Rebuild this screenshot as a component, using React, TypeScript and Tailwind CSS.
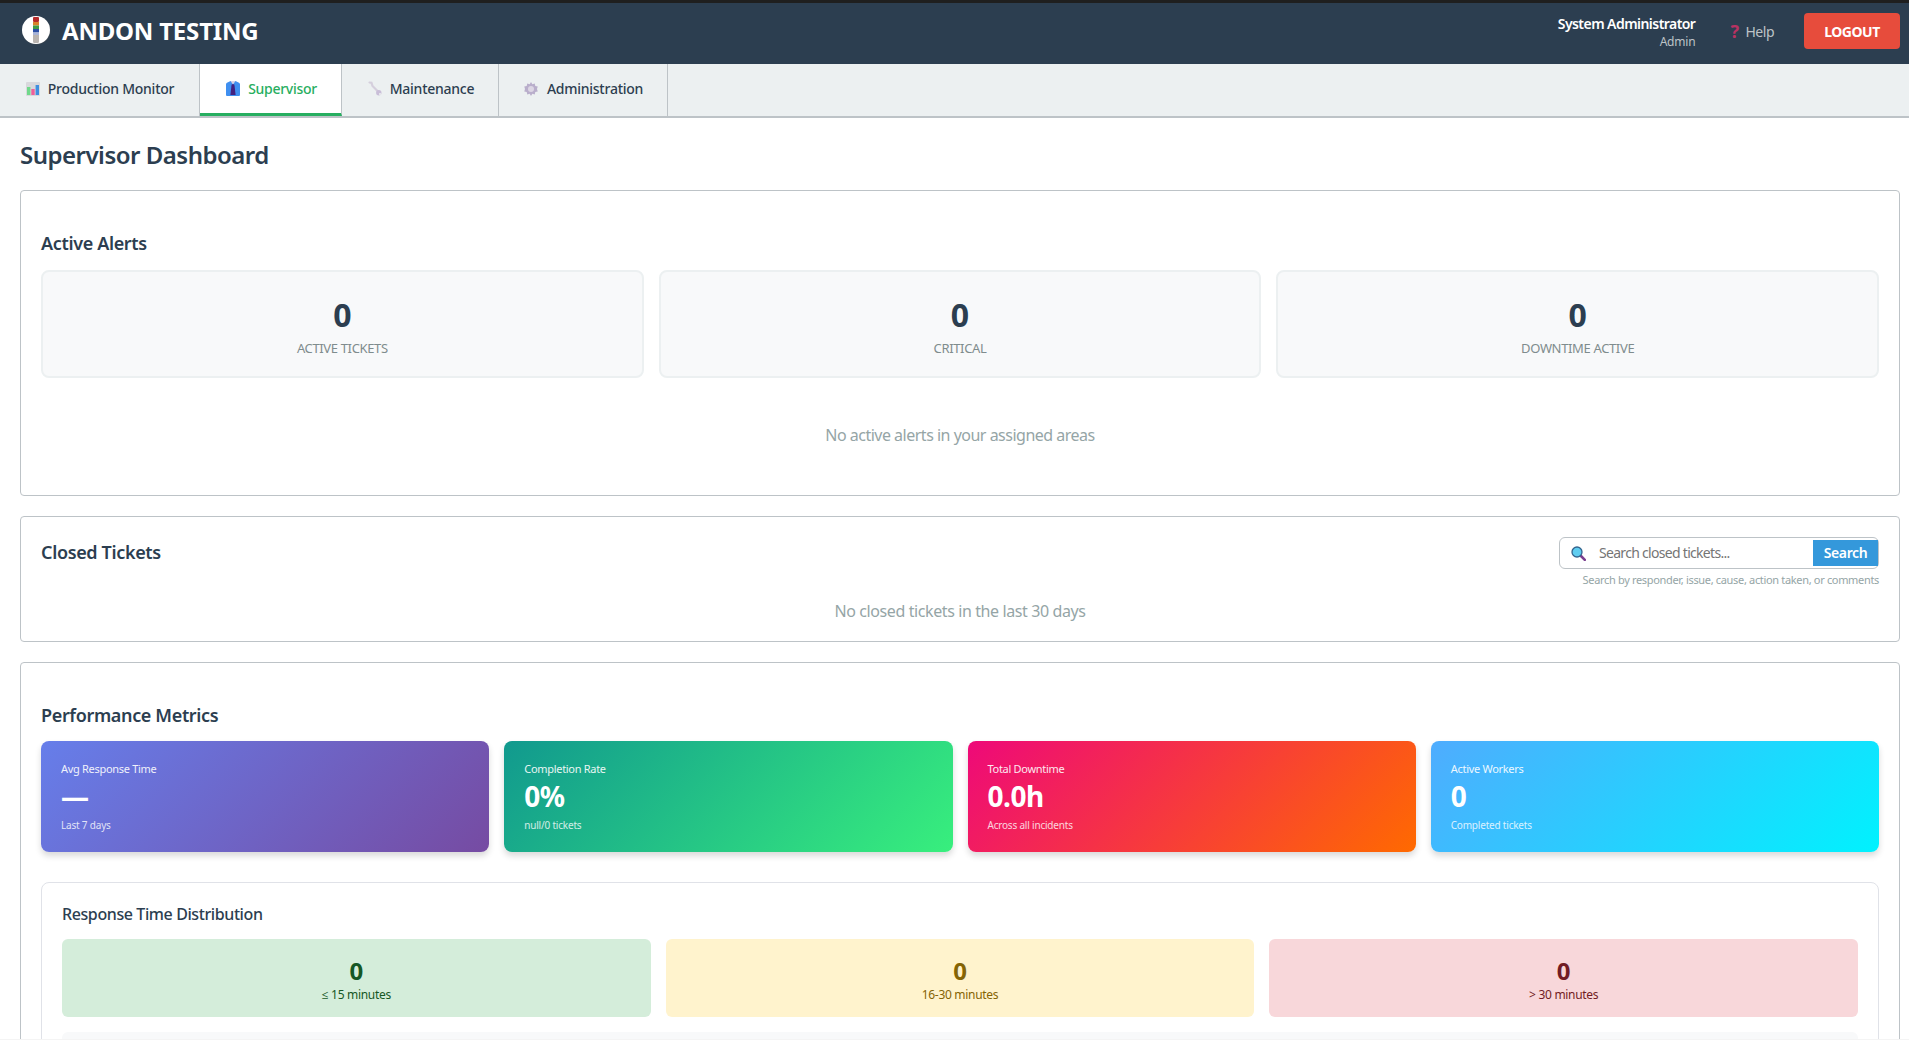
import React from "react";

const FONT = "font-['Noto_Sans','Open_Sans','Liberation_Sans',sans-serif]";

function Logo() {
  return (
    <svg width="30" height="30" viewBox="0 0 30 30" className="mb-[3px] shrink-0">
      <circle cx="15.5" cy="15.5" r="14" fill="#555" opacity="0.45" />
      <circle cx="15" cy="15" r="14" fill="#fff" />
      <rect x="12" y="2" width="6" height="5" rx="1" fill="#b52a2a" />
      <rect x="12" y="7" width="6" height="3.5" fill="#d9812a" />
      <rect x="12" y="10.5" width="6" height="3.5" fill="#3f9a45" />
      <rect x="12" y="14" width="6" height="3.5" fill="#2b4fa5" />
      <rect x="12" y="17.5" width="6" height="2.5" fill="#a9b4d6" />
      <path d="M12 20h6v6.5a1.5 1.5 0 0 1-1.5 1.5h-3a1.5 1.5 0 0 1-1.5-1.5z" fill="#b9b4b0" />
    </svg>
  );
}

function ChartIcon() {
  return (
    <svg width="14" height="14" viewBox="0 0 14 14" className="shrink-0">
      <rect width="14" height="14" rx="1" fill="#d8d8dc" />
      <rect x="1" y="5" width="3.4" height="8" fill="#6fd98a" />
      <rect x="5.3" y="7" width="3.4" height="6" fill="#ef5f9a" />
      <rect x="9.6" y="3" width="3.4" height="10" fill="#3f8fe0" />
    </svg>
  );
}

function TieIcon() {
  return (
    <svg width="14" height="15" viewBox="0 0 14 15" className="shrink-0">
      <path d="M1.5 1.500 4.500 0h5l3 1.500c.8.4 1.500 1 1.500 2V14a1 1 0 0 1-1 1H1a1 1 0 0 1-1-1V3.500c0-1 .7-1.600 1.500-2z" fill="#3f8ff0" />
      <path d="M4.500 0h5L7 3.500z" fill="#d9d4e6" />
      <path d="M5.800 3.200h2.400l.4 1.800 1 9H4.400l1-9z" fill="#43217f" />
    </svg>
  );
}

function WrenchIcon() {
  return (
    <svg width="14" height="15" viewBox="0 0 14 15" className="shrink-0">
      <path d="M1.500 1.500 3.500 1.800 4.500 5l6 6" fill="none" stroke="#d5cfdd" strokeWidth="2.200" strokeLinecap="round" />
      <circle cx="10.800" cy="11.800" r="2.700" fill="#c9bed8" />
      <circle cx="12" cy="13" r="1" fill="#edeff0" />
    </svg>
  );
}

function GearIcon() {
  return (
    <svg width="16" height="16" viewBox="0 0 24 24" className="shrink-0">
      <path
        d="M12 1.500 14 5l3.600-1.100.8 3.700 3.700.8L21 12l1.100 3.600-3.700.8-.8 3.700L14 19l-2 3.500L10 19l-3.600 1.100-.8-3.700-3.700-.8L3 12 1.900 8.400l3.700-.8.8-3.700L10 5z"
        fill="#b9aecb"
      />
      <circle cx="12" cy="12" r="4.500" fill="#dcd6e4" />
    </svg>
  );
}

function SearchIcon() {
  return (
    <svg width="15" height="15" viewBox="0 0 15 15" className="shrink-0">
      <path d="M9.500 9.500 13.800 13.800" stroke="#7b3f8f" strokeWidth="2.600" strokeLinecap="round" />
      <circle cx="6" cy="6" r="5" fill="#5fcdf0" stroke="#33658f" strokeWidth="1.300" />
    </svg>
  );
}

function Tab({ icon, label, width, active }: { icon: React.ReactNode; label: string; width: string; active?: boolean }) {
  return (
    <div
      className={
        active
          ? `${width} flex items-center justify-center gap-2 border-r border-[#bdc3c7] border-b-[3px] border-b-[#27ae60] bg-white text-[14px] font-medium tracking-[-0.3px] text-[#27ae60]`
          : `${width} flex items-center justify-center gap-2 border-r border-[#bdc3c7] pb-[3px] text-[14px] font-medium tracking-[-0.25px] text-[#2c3e50]`
      }
    >
      {icon}
      <span>{label}</span>
    </div>
  );
}

function AlertCard({ value, label }: { value: string; label: string }) {
  return (
    <div className="flex h-[108px] flex-col items-center rounded-lg border-2 border-[#ecf0f1] bg-[#f8f9fa] pt-[19px]">
      <div className="text-[32px] leading-[48px] font-bold text-[#2c3e50]">{value}</div>
      <div className="text-[13px] leading-[18px] tracking-[-0.35px] text-[#7f8c8d]">{label}</div>
    </div>
  );
}

function Metric({ gradient, label, value, sub }: { gradient: string; label: string; value: string; sub: string }) {
  return (
    <div className={`h-[111px] rounded-lg px-5 pt-[20px] text-white shadow-[0_4px_6px_rgba(0,0,0,0.15)] ${gradient}`}>
      <div className="text-[11px] leading-[16px] tracking-[-0.3px] opacity-90">{label}</div>
      <div className="text-[28px] leading-[38px] font-bold tracking-[-0.5px]">{value}</div>
      <div className="mt-[3px] text-[10px] leading-[14px] tracking-[-0.2px] opacity-80">{sub}</div>
    </div>
  );
}

function DistCell({ bg, color, value, label }: { bg: string; color: string; value: string; label: string }) {
  return (
    <div className={`flex h-[78px] flex-col items-center rounded-md pt-[16px] ${bg} ${color}`}>
      <div className="text-[24px] leading-[32px] font-bold">{value}</div>
      <div className="text-[12px] leading-[16px] tracking-[-0.3px]">{label}</div>
    </div>
  );
}

export default function App() {
  return (
    <div className={`flex h-[1040px] flex-col overflow-hidden bg-white ${FONT}`}>
      <div className="h-[3px] shrink-0 bg-[#1f1f1f]" />
      <header className="flex h-[61px] shrink-0 items-center justify-between bg-[#2c3e50] pb-[5px] pl-[21px] pr-[9px] text-white">
        <div className="flex items-center gap-[11px]">
          <Logo />
          <span className="text-[24px] leading-[32px] font-bold tracking-[-0.2px]">ANDON TESTING</span>
        </div>
        <div className="flex items-center">
          <div className="mt-[2px] flex flex-col items-end">
            <span className="text-[14px] leading-[20px] font-semibold tracking-[-0.55px]">System Administrator</span>
            <span className="text-[12px] leading-[16px] tracking-[-0.2px] text-[#bdc3c7]">Admin</span>
          </div>
          <div className="ml-[35px] flex items-center gap-[7px] text-[14px] tracking-[-0.5px] text-[#bdc3c7]">
            <span className="text-[18px] leading-[18px] font-bold text-[#b83262]">?</span>
            <span>Help</span>
          </div>
          <div className="ml-[30px] flex h-9 w-24 items-center justify-center rounded bg-[#e74c3c] text-[14px] font-bold tracking-[-0.5px]">
            LOGOUT
          </div>
        </div>
      </header>
      <nav className="flex h-[54px] shrink-0 border-b-2 border-[#bdc3c7] bg-[#ecf0f1]">
        <Tab icon={<ChartIcon />} label="Production Monitor" width="w-[200px] pl-px" />
        <Tab icon={<TieIcon />} label="Supervisor" width="w-[142px] pl-[2px]" active />
        <Tab icon={<WrenchIcon />} label="Maintenance" width="w-[157px] pl-[2px]" />
        <Tab icon={<GearIcon />} label="Administration" width="w-[169px]" />
      </nav>
      <main className="flex min-h-0 flex-1 flex-col overflow-hidden pl-5 pr-[9px]">
        <h1 className="mt-[20px] mb-[18px] text-[24px] leading-[34px] font-semibold tracking-[-0.5px] text-[#2c3e50]">
          Supervisor Dashboard
        </h1>

        <section className="h-[306px] shrink-0 rounded border border-[#bdc3c7] px-5">
          <h2 className="mt-[39px] mb-[14px] text-[18px] leading-[26px] font-semibold tracking-[-0.35px] text-[#2c3e50]">
            Active Alerts
          </h2>
          <div className="grid grid-cols-3 gap-[15px]">
            <AlertCard value="0" label="ACTIVE TICKETS" />
            <AlertCard value="0" label="CRITICAL" />
            <AlertCard value="0" label="DOWNTIME ACTIVE" />
          </div>
          <p className="mt-[46px] text-center text-[16px] leading-[22px] tracking-[-0.5px] text-[#95a5a6]">
            No active alerts in your assigned areas
          </p>
        </section>

        <section className="mt-[20px] h-[126px] shrink-0 rounded border border-[#bdc3c7] px-5 pt-5">
          <div className="flex items-start justify-between">
            <h2 className="mt-[2px] text-[18px] leading-[26px] font-semibold tracking-[-0.35px] text-[#2c3e50]">
              Closed Tickets
            </h2>
            <div className="flex flex-col items-end">
              <div className="flex h-8 w-[320px] items-center rounded-md border border-[#bdc3c7] pl-[11px]">
                <SearchIcon />
                <span className="mb-[2px] ml-[13px] flex-1 text-[14px] tracking-[-0.7px] text-[#757575]">Search closed tickets...</span>
                <div className="flex h-[26px] w-[65px] items-center justify-center bg-[#3498db] pb-[2px] text-[14px] font-semibold tracking-[-0.4px] text-white">
                  Search
                </div>
              </div>
              <span className="mt-[3px] text-[11px] leading-[16px] tracking-[-0.33px] text-[#95a5a6]">
                Search by responder, issue, cause, action taken, or comments
              </span>
            </div>
          </div>
          <p className="mt-[12px] text-center text-[16px] leading-[22px] tracking-[-0.4px] text-[#95a5a6]">
            No closed tickets in the last 30 days
          </p>
        </section>

        <section className="mt-[20px] shrink-0 rounded border border-[#bdc3c7] px-5">
          <h2 className="mt-[39px] mb-[13px] text-[18px] leading-[26px] font-semibold tracking-[-0.35px] text-[#2c3e50]">
            Performance Metrics
          </h2>
          <div className="grid grid-cols-4 gap-[15px]">
            <Metric gradient="bg-[linear-gradient(135deg,#667eea,#764ba2)]" label="Avg Response Time" value="—" sub="Last 7 days" />
            <Metric gradient="bg-[linear-gradient(135deg,#11998e,#38ef7d)]" label="Completion Rate" value="0%" sub="null/0 tickets" />
            <Metric gradient="bg-[linear-gradient(135deg,#ee0979,#ff6a00)]" label="Total Downtime" value="0.0h" sub="Across all incidents" />
            <Metric gradient="bg-[linear-gradient(135deg,#4facfe,#00f2fe)]" label="Active Workers" value="0" sub="Completed tickets" />
          </div>
          <div className="mt-[30px] rounded-lg border border-[#e0e2e8] px-5 pt-[19px] pb-5">
            <h3 className="mb-[13px] text-[16px] leading-[24px] font-medium tracking-[-0.4px] text-[#2c3e50]">
              Response Time Distribution
            </h3>
            <div className="grid grid-cols-3 gap-[15px]">
              <DistCell bg="bg-[#d4edda]" color="text-[#155724]" value="0" label="≤ 15 minutes" />
              <DistCell bg="bg-[#fff3cd]" color="text-[#856404]" value="0" label="16-30 minutes" />
              <DistCell bg="bg-[#f8d7da]" color="text-[#721c24]" value="0" label="> 30 minutes" />
            </div>
            <div className="mt-[15px] h-[60px] rounded-md bg-[#f8f9fa]" />
          </div>
        </section>
      </main>
      <div className="h-px shrink-0 bg-[#f4f4f4]" />
    </div>
  );
}
